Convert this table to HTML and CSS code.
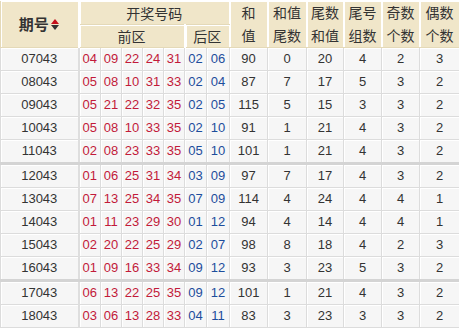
FILE: index.html
```html
<!DOCTYPE html>
<html lang="zh">
<head>
<meta charset="utf-8">
<link rel="stylesheet" href="styles.css">
</head>
<body>
<table class="tbl">
<colgroup>
<col class="c-qh"><col class="c-n1"><col class="c-n"><col class="c-n"><col class="c-n"><col class="c-n"><col class="c-b1"><col class="c-b2"><col class="c-r1"><col class="c-r2"><col class="c-r3"><col class="c-r4"><col class="c-r5"><col class="c-r6">
</colgroup>
<thead>
<tr class="h1">
<th rowspan="2" class="qh">期号<span class="sort"><span class="up"></span><span class="dn"></span></span></th>
<th colspan="7">开奖号码</th>
<th rowspan="2" class="two">和<br>值</th>
<th rowspan="2" class="two">和值<br>尾数</th>
<th rowspan="2" class="two">尾数<br>和值</th>
<th rowspan="2" class="two">尾号<br>组数</th>
<th rowspan="2" class="two">奇数<br>个数</th>
<th rowspan="2" class="two">偶数<br>个数</th>
</tr>
<tr class="h2">
<th colspan="5">前区</th>
<th colspan="2">后区</th>
</tr>
</thead>
<tbody>
<tr><td>07043</td><td class="r">04</td><td class="r">09</td><td class="r">22</td><td class="r">24</td><td class="r">31</td><td class="b">02</td><td class="b">06</td><td>90</td><td>0</td><td>20</td><td>4</td><td>2</td><td>3</td></tr>
<tr><td>08043</td><td class="r">05</td><td class="r">08</td><td class="r">10</td><td class="r">31</td><td class="r">33</td><td class="b">02</td><td class="b">04</td><td>87</td><td>7</td><td>17</td><td>5</td><td>3</td><td>2</td></tr>
<tr><td>09043</td><td class="r">05</td><td class="r">21</td><td class="r">22</td><td class="r">32</td><td class="r">35</td><td class="b">02</td><td class="b">05</td><td>115</td><td>5</td><td>15</td><td>3</td><td>3</td><td>2</td></tr>
<tr><td>10043</td><td class="r">05</td><td class="r">08</td><td class="r">10</td><td class="r">33</td><td class="r">35</td><td class="b">02</td><td class="b">10</td><td>91</td><td>1</td><td>21</td><td>4</td><td>3</td><td>2</td></tr>
<tr><td>11043</td><td class="r">02</td><td class="r">08</td><td class="r">23</td><td class="r">33</td><td class="r">35</td><td class="b">05</td><td class="b">10</td><td>101</td><td>1</td><td>21</td><td>4</td><td>3</td><td>2</td></tr>
<tr class="grp"><td>12043</td><td class="r">01</td><td class="r">06</td><td class="r">25</td><td class="r">31</td><td class="r">34</td><td class="b">03</td><td class="b">09</td><td>97</td><td>7</td><td>17</td><td>4</td><td>3</td><td>2</td></tr>
<tr><td>13043</td><td class="r">07</td><td class="r">13</td><td class="r">25</td><td class="r">34</td><td class="r">35</td><td class="b">07</td><td class="b">09</td><td>114</td><td>4</td><td>24</td><td>4</td><td>4</td><td>1</td></tr>
<tr><td>14043</td><td class="r">01</td><td class="r">11</td><td class="r">23</td><td class="r">29</td><td class="r">30</td><td class="b">01</td><td class="b">12</td><td>94</td><td>4</td><td>14</td><td>4</td><td>4</td><td>1</td></tr>
<tr><td>15043</td><td class="r">02</td><td class="r">20</td><td class="r">22</td><td class="r">25</td><td class="r">29</td><td class="b">02</td><td class="b">07</td><td>98</td><td>8</td><td>18</td><td>4</td><td>2</td><td>3</td></tr>
<tr><td>16043</td><td class="r">01</td><td class="r">09</td><td class="r">16</td><td class="r">33</td><td class="r">34</td><td class="b">09</td><td class="b">12</td><td>93</td><td>3</td><td>23</td><td>5</td><td>3</td><td>2</td></tr>
<tr class="grp"><td>17043</td><td class="r">06</td><td class="r">13</td><td class="r">22</td><td class="r">25</td><td class="r">35</td><td class="b">09</td><td class="b">12</td><td>101</td><td>1</td><td>21</td><td>4</td><td>3</td><td>2</td></tr>
<tr><td>18043</td><td class="r">03</td><td class="r">06</td><td class="r">13</td><td class="r">28</td><td class="r">33</td><td class="b">04</td><td class="b">11</td><td>83</td><td>3</td><td>23</td><td>3</td><td>3</td><td>2</td></tr>
</tbody>
</table>
</body>
</html>
```
FILE: styles.css
```css
html, body {
  margin: 0;
  padding: 0;
  background: #fff;
}
.tbl {
  border-collapse: collapse;
  table-layout: fixed;
  width: 459px;
  font-family: "Noto Sans CJK SC", "Liberation Sans", sans-serif;
  color: #333;
}
.c-qh { width: 78px; }
.c-n1 { width: 22px; }
.c-n { width: 21px; }
.c-b1 { width: 22px; }
.c-b2 { width: 23px; }
.c-r1 { width: 38px; }
.c-r2 { width: 39px; }
.c-r3 { width: 37px; }
.c-r4 { width: 38px; }
.c-r5 { width: 38px; }
.c-r6 { width: 40px; }
th, td {
  border: 1px solid #dcdcdc;
  box-shadow: inset 1px 1px 0 #fff;
  text-align: center;
  padding: 0;
  overflow: hidden;
  white-space: nowrap;
}
th {
  background: #f0e6c9;
  font-weight: normal;
  font-size: 14px;
  line-height: 22px;
  color: #333;
  border-color: #fff #fff #e4d9b8 #fff;
}
.h1 th { height: 23px; }
.h2 th { height: 22px; }
th.two { line-height: 23px; }
th.qh {
  font-weight: bold;
  font-size: 15px;
  border-left: 1px solid #e4d9b8;
}
.sort {
  display: inline-block;
  vertical-align: middle;
  margin-left: 2px;
  width: 9px;
  height: 12px;
  position: relative;
  top: -1px;
}
.sort .up, .sort .dn {
  display: block;
  width: 0;
  height: 0;
  border-left: 4px solid transparent;
  border-right: 4px solid transparent;
}
.sort .up {
  border-bottom: 5px solid #c4101b;
  margin-bottom: 1px;
}
.sort .dn {
  border-top: 5px solid #333;
}
td {
  background: #f6f6f6;
  height: 22px;
  font-family: "Liberation Sans", sans-serif;
  font-size: 13px;
  line-height: 22px;
}
td.r { color: #c21a3a; }
td.b { color: #1d4d9c; }
tr.grp td { border-top: 3px solid #d4d4d4; }
td:first-child { border-right: 2px solid #dedede; }
th:first-child { border-right: 2px solid #fff; }
```
